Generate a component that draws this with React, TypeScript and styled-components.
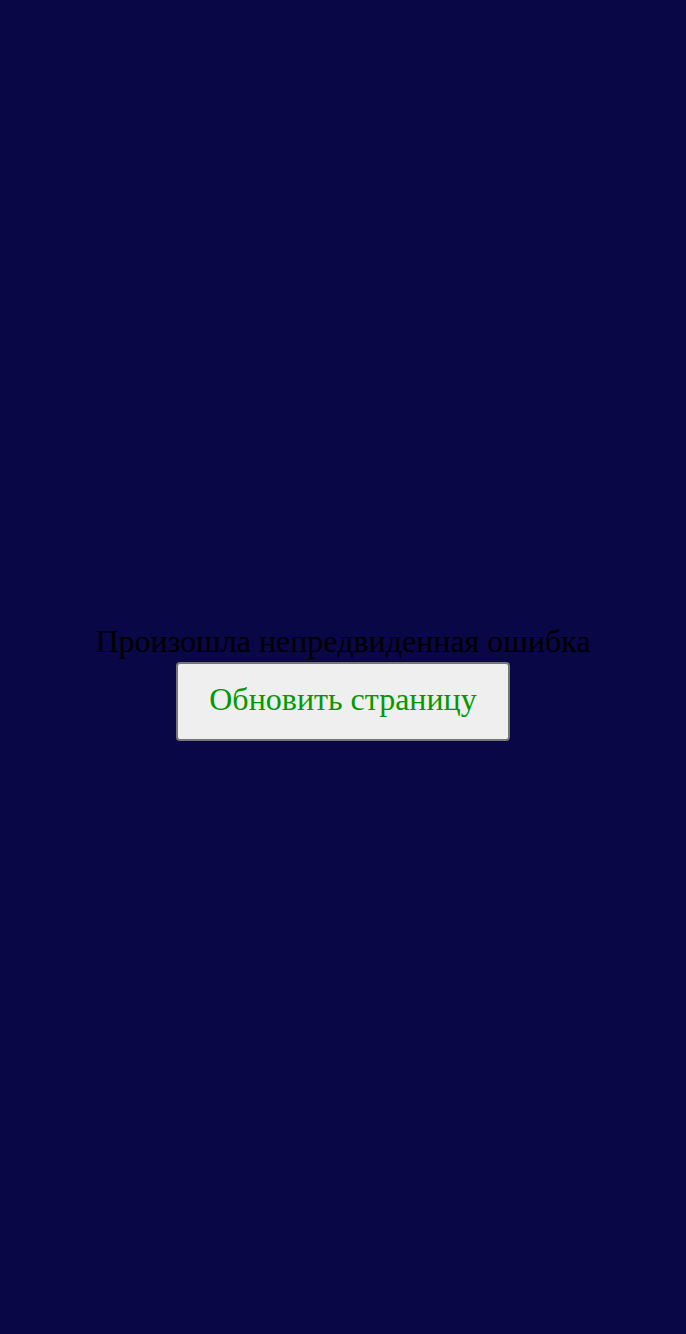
import styled, { createGlobalStyle } from 'styled-components'

const GlobalStyle = createGlobalStyle`
    html, body {
        margin: 0;
        padding: 0;
        background-color: #0a0746;
    }
`

const App = () => {
    return(
        <>
        <GlobalStyle />
        <ErrorScreen>
            <ErrorMessage>Произошла непредвиденная ошибка</ErrorMessage>
            <ReloadButton onClick={() => window.location.reload()}>Обновить страницу</ReloadButton>
        </ErrorScreen>
        </>
    )
}

export default App

const ErrorScreen = styled.div`
    display: flex;
    flex-direction: column;
    align-items: center;
    justify-content: center;
    min-height: 100vh;
    padding-top: 30px;
    box-sizing: border-box;
    background-color: #0a0746;
    font-family: "Liberation Serif", "Times New Roman", serif;
`

const ErrorMessage = styled.div`
    color: #000;
    font-size: 32px;
    line-height: 37px;
    text-align: center;
`

const ReloadButton = styled.button`
    margin-top: 2px;
    font-family: "Liberation Serif", "Times New Roman", serif;
    font-size: 32px;
    line-height: 37px;
    color: #009a00;
    background-color: #efefef;
    border: 2px solid #767676;
    border-radius: 4px;
    padding: 17px 31px 21px;
    cursor: pointer;
`
